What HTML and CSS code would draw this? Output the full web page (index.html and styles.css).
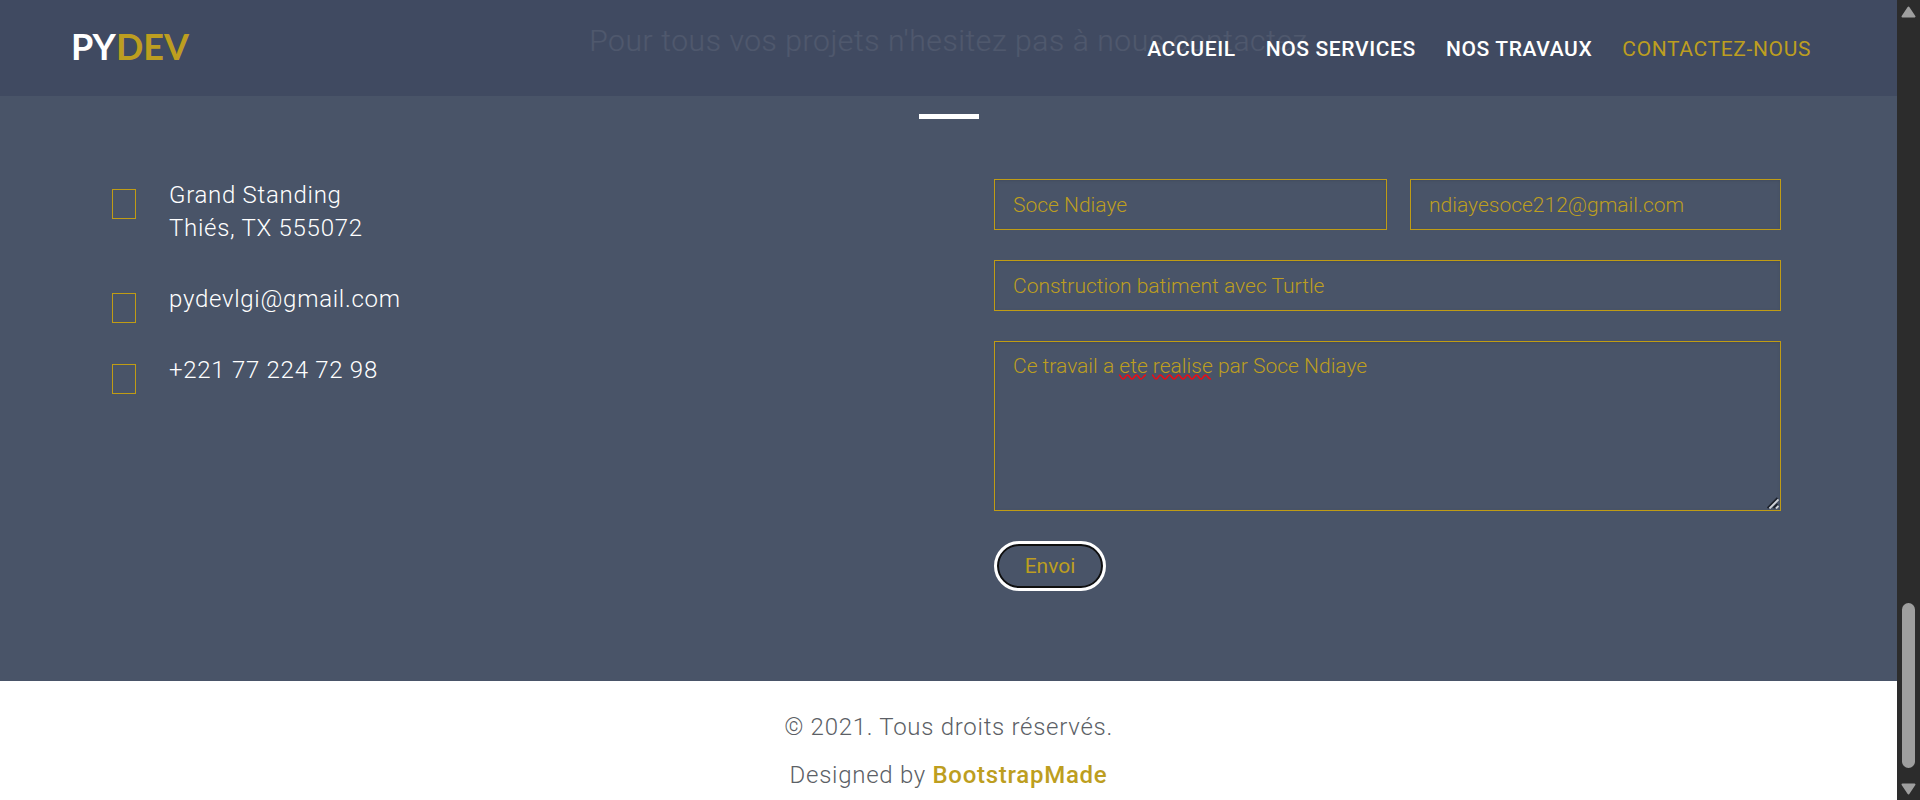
FILE: index.html
```html
<!DOCTYPE html>
<html lang="fr">
<head>
<meta charset="utf-8">
<title>PYDEV - Contactez-nous</title>
<link rel="stylesheet" href="styles.css">
</head>
<body>
<div class="viewport">
  <div class="page">
    <header class="header">
      <a class="logo" href="#accueil">PY<span class="logo-accent">DEV</span></a>
      <nav class="nav">
        <a class="nav-link" href="#accueil">ACCUEIL</a>
        <a class="nav-link" href="#services">NOS SERVICES</a>
        <a class="nav-link" href="#travaux">NOS TRAVAUX</a>
        <a class="nav-link nav-link-active" href="#contact">CONTACTEZ-NOUS</a>
      </nav>
    </header>
    <main class="contact" id="contact">
      <p class="intro">Pour tous vos projets n'hesitez pas à nous contactez</p>
      <div class="divider"></div>
      <div class="columns">
        <address class="info">
          <div class="info-row"><span class="info-icon"></span><p class="info-text">Grand Standing<br>Thiés, TX 555072</p></div>
          <div class="info-row"><span class="info-icon"></span><p class="info-text">pydevlgi@gmail.com</p></div>
          <div class="info-row"><span class="info-icon"></span><p class="info-text">+221 77 224 72 98</p></div>
        </address>
        <form class="form">
          <div class="form-row">
            <input class="field" type="text" aria-label="Nom" value="Soce Ndiaye">
            <input class="field" type="email" aria-label="Email" value="ndiayesoce212@gmail.com">
          </div>
          <input class="field" type="text" aria-label="Sujet" value="Construction batiment avec Turtle">
          <div class="message">
            <textarea class="field field-area" aria-label="Message" spellcheck="false">Ce travail a ete realise par Soce Ndiaye</textarea>
            <svg class="spelling" width="96" height="7" viewBox="0 0 96 7" fill="none" stroke="#f00b14" stroke-width="1.5" aria-hidden="true">
              <path d="M1 1C3 1 3 5 5 5S7.500 1 9.500 1S12 5 14 5S16.500 1 18.500 1S21 5 23 5S25.500 1 28 1"/>
              <path d="M34 1C36 1 36 5 38 5S40.500 1 42.500 1S45 5 47 5S49.500 1 51.500 1S54 5 56 5S58.500 1 60.500 1S63 5 65 5S67.500 1 69.500 1S72 5 74 5S76.500 1 78.500 1S81 5 83 5S85.500 1 87.500 1S90 5 93 5"/>
            </svg>
            <svg class="grip" width="12" height="12" viewBox="0 0 12 12" fill="none" stroke-width="1.8" aria-hidden="true">
              <path d="M0.500 11L10.500 1M6.500 11L10.500 7" stroke="#1c212b"/>
              <path d="M2.500 11.500L11.500 2.500M9 11.500L11.500 9" stroke="#d0d3d8"/>
            </svg>
          </div>
          <button class="send" type="submit">Envoi</button>
        </form>
      </div>
    </main>
    <footer class="footer">
      <p class="footer-line">© 2021. Tous droits réservés.</p>
      <p class="footer-line">Designed by <a class="footer-link" href="#bootstrapmade">BootstrapMade</a></p>
    </footer>
  </div>
  <div class="scrollbar" aria-hidden="true">
    <svg class="arrow" width="15" height="12" viewBox="0 0 15 12"><path d="M7.500 1.500L13.500 10.500H1.500Z" fill="#9f9f9f" stroke="#9f9f9f" stroke-width="2" stroke-linejoin="round"/></svg>
    <div class="track"><div class="thumb"></div></div>
    <svg class="arrow" width="15" height="12" viewBox="0 0 15 12"><path d="M7.500 10.500L13.500 1.500H1.500Z" fill="#9f9f9f" stroke="#9f9f9f" stroke-width="2" stroke-linejoin="round"/></svg>
  </div>
</div>
</body>
</html>
```
FILE: styles.css
```css
* { box-sizing: border-box; }
body {
  margin: 0;
  font-family: Roboto, "Open Sans", sans-serif;
  font-size: 24px;
  font-weight: 300;
  line-height: 33px;
  color: #fff;
}
p { margin: 0; }
a { text-decoration: none; }

.viewport { display: flex; height: 100vh; overflow: hidden; }
.page { position: relative; flex: 1; min-width: 0; background: #fff; }

.header {
  position: absolute;
  top: 0;
  left: 0;
  right: 0;
  z-index: 2;
  display: flex;
  align-items: center;
  justify-content: space-between;
  height: 96px;
  padding: 0 86px 0 71px;
  background: rgba(64, 74, 97, 0.92);
}
.logo {
  padding-bottom: 3px;
  font-family: Lato, sans-serif;
  font-size: 36px;
  font-weight: 700;
  color: #fff;
}
.logo-accent { color: #bd9e20; }
.nav { display: flex; gap: 30px; padding-top: 2px; }
.nav-link { font-size: 21px; font-weight: 500; letter-spacing: 0.03em; color: #fff; }
.nav-link-active { font-weight: 400; color: #bd9e20; }

.contact { background: #495468; padding: 24px 0 90px; }
.intro { font-size: 30px; text-align: center; letter-spacing: 0.02em; }
.divider { width: 60px; height: 5px; margin: 57px auto 60px; background: #fff; }
.columns {
  display: grid;
  grid-template-columns: 882fr 787fr;
  align-items: start;
  padding: 0 116px 0 112px;
}

.info { display: flex; flex-direction: column; gap: 38px; font-style: normal; }
.info-row { display: flex; gap: 33px; }
.info-icon { width: 24px; height: 30px; margin: 10px 0 -10px; border: 1px solid #c09c14; }
.info-text { letter-spacing: 0.03em; }

.form { display: flex; flex-direction: column; align-items: stretch; gap: 30px; }
.form-row { display: grid; grid-template-columns: 393fr 371fr; gap: 23px; }
.field {
  display: block;
  width: 100%;
  height: 51px;
  margin: 0;
  padding: 9px 18px;
  border: 1px solid #c09c14;
  border-radius: 0;
  background: transparent;
  box-shadow: inset 0 1px 3px rgba(0, 0, 0, 0.1);
  color: #bd9e20;
  font: inherit;
  font-size: 21px;
  line-height: 30px;
}
.message { position: relative; }
.field-area { height: 170px; resize: none; }
.spelling { position: absolute; top: 33px; left: 124px; }
.grip { position: absolute; right: 2px; bottom: 2px; }
.send {
  align-self: flex-start;
  width: 112px;
  height: 50px;
  padding: 0;
  border: 3px solid #fff;
  border-radius: 25px;
  background: transparent;
  box-shadow: inset 0 0 0 2px #101010;
  color: #bd9e20;
  font: inherit;
  font-size: 21px;
  font-weight: 400;
}

.footer {
  display: flex;
  flex-direction: column;
  gap: 15px;
  padding: 30px 0 8px;
  text-align: center;
  color: #5c5f66;
}
.footer-line { letter-spacing: 0.03em; }
.footer-link { font-weight: 500; color: #bd9e20; }

.scrollbar {
  display: flex;
  flex-direction: column;
  align-items: center;
  width: 23px;
  padding: 6px 0 5px;
  background: #2c2c2c;
}
.arrow { flex: none; }
.track { flex: 1; display: flex; flex-direction: column; justify-content: flex-end; padding-bottom: 15px; }
.thumb { width: 13px; height: 165px; border-radius: 7px; background: #9f9f9f; }
```
